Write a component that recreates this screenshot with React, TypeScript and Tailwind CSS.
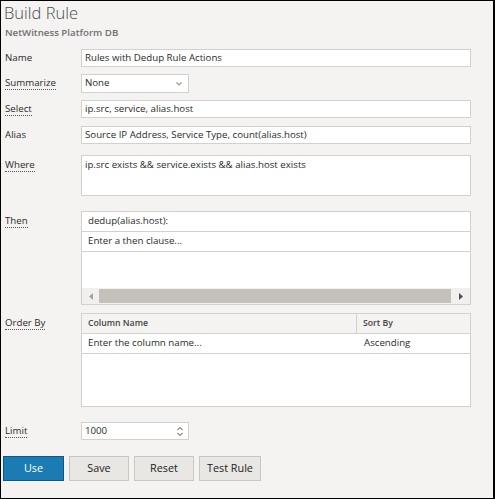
import React from 'react';

const labelCls = 'w-[80px] shrink-0 pl-[4px] text-[9.7px] text-[#2a2a2a]';
const dotted = 'border-b border-dotted border-[#555] leading-[12px]';
const inputCls = 'bg-white border border-[#d3d1ce] text-[9.7px] text-[#2a2a2a]';

function Row({ label, dot, top, children, alignTop }: { label: string; dot?: boolean; top: string; children: React.ReactNode; alignTop?: boolean }) {
  return (
    <div className={`flex ${alignTop ? 'items-start' : 'items-center'} ${top}`}>
      <div className={`${labelCls} ${alignTop ? 'pt-[3px]' : ''}`}>
        <span className={dot ? dotted : ''}>{label}</span>
      </div>
      {children}
    </div>
  );
}

export default function App() {
  return (
    <div
      className="w-[495px] h-[499px] bg-[#f4f3f1] border-t border-l border-b border-r-2 border-black overflow-hidden text-[#333]"
      style={{ fontFamily: '"Open Sans", "Liberation Sans", sans-serif' }}
    >
      <div className="pl-[3px]">
        <div className="text-[16.5px] leading-[24px] font-light text-[#4a4a4a]">Build Rule</div>
        <div className="text-[9.7px] leading-[14px] font-semibold text-[#707070] mt-[1px] pl-[1px]">NetWitness Platform DB</div>
      </div>

      <Row label="Name" top="mt-[9px]">
        <div className={`w-[390px] h-[18px] ${inputCls} flex items-center px-[3px]`}>
          Rules with Dedup Rule Actions
        </div>
      </Row>

      <Row label="Summarize" dot top="mt-[7px]">
        <div className={`w-[108px] h-[19px] ${inputCls} flex items-center justify-between px-[3px]`}>
          <span>None</span>
          <svg width="8" height="6" viewBox="0 0 8 6" className="mr-[2px]">
            <path d="M1.5 1.5 L4 4 L6.5 1.5" fill="none" stroke="#999" strokeWidth="1.2" />
          </svg>
        </div>
      </Row>

      <Row label="Select" dot top="mt-[7px]">
        <div className={`w-[390px] h-[18px] ${inputCls} flex items-center px-[3px]`}>
          ip.src, service, alias.host
        </div>
      </Row>

      <Row label="Alias" top="mt-[8px]">
        <div className={`w-[390px] h-[18px] ${inputCls} flex items-center px-[3px]`}>
          Source IP Address, Service Type, count(alias.host)
        </div>
      </Row>

      <Row label="Where" dot top="mt-[11px]" alignTop>
        <div className={`w-[390px] h-[41px] ${inputCls} px-[3px] pt-[2px] leading-[13px]`}>
          ip.src exists &amp;&amp; service.exists &amp;&amp; alias.host exists
        </div>
      </Row>

      <Row label="Then" dot top="mt-[15px]" alignTop>
        <div className={`w-[390px] h-[94px] ${inputCls} flex flex-col`}>
          <div className="h-[20px] border-b border-[#d3d1ce] flex items-center pl-[6px]">dedup(alias.host):</div>
          <div className="h-[20px] border-b border-[#d3d1ce] flex items-center pl-[6px]">Enter a then clause...</div>
          <div className="flex-1" />
          <div className="h-[16px] bg-[#f1f0ee] flex items-center">
            <div className="w-[17px] flex justify-center">
              <svg width="4" height="7" viewBox="0 0 4 7"><path d="M4 0 L0 3.5 L4 7 Z" fill="#a3a3a3" /></svg>
            </div>
            <div className="w-[352px] h-[14px] bg-[#c4c1bb]" />
            <div className="flex-1 flex justify-center">
              <svg width="4" height="7" viewBox="0 0 4 7"><path d="M0 0 L4 3.5 L0 7 Z" fill="#505050" /></svg>
            </div>
          </div>
        </div>
      </Row>

      <Row label="Order By" dot top="mt-[8px]" alignTop>
        <div className={`w-[390px] h-[94px] ${inputCls} flex flex-col`}>
          <div className="h-[20px] bg-[#f4f3f1] border-b border-[#d3d1ce] flex text-[8.7px] font-semibold text-[#444]">
            <div className="w-[275px] border-r border-[#d3d1ce] flex items-center pl-[6px]">Column Name</div>
            <div className="flex-1 flex items-center pl-[6px]">Sort By</div>
          </div>
          <div className="h-[20px] border-b border-[#d3d1ce] flex">
            <div className="w-[276px] flex items-center pl-[6px]">Enter the column name...</div>
            <div className="flex-1 flex items-center pl-[6px]">Ascending</div>
          </div>
        </div>
      </Row>

      <Row label="Limit" dot top="mt-[15px]">
        <div className={`w-[108px] h-[18px] ${inputCls} flex items-center justify-between px-[3px]`}>
          <span>1000</span>
          <svg width="8" height="11" viewBox="0 0 8 11" className="mr-[1px]">
            <path d="M1.5 4 L4 1.5 L6.5 4 M1.5 7 L4 9.5 L6.5 7" fill="none" stroke="#888" strokeWidth="1.1" />
          </svg>
        </div>
      </Row>

      <div className="flex gap-[5px] pl-[2px] mt-[16px] text-[10.8px]">
        <button className="w-[61px] h-[25px] bg-[#1a7cb3] border border-[#0f5784] text-white">Use</button>
        <button className="w-[60px] h-[25px] bg-[#e8e7e4] border border-[#c9c7c3] text-[#222]">Save</button>
        <button className="w-[60px] h-[25px] bg-[#e8e7e4] border border-[#c9c7c3] text-[#222]">Reset</button>
        <button className="w-[62px] h-[25px] bg-[#e8e7e4] border border-[#c9c7c3] text-[#222]">Test Rule</button>
      </div>
    </div>
  );
}
